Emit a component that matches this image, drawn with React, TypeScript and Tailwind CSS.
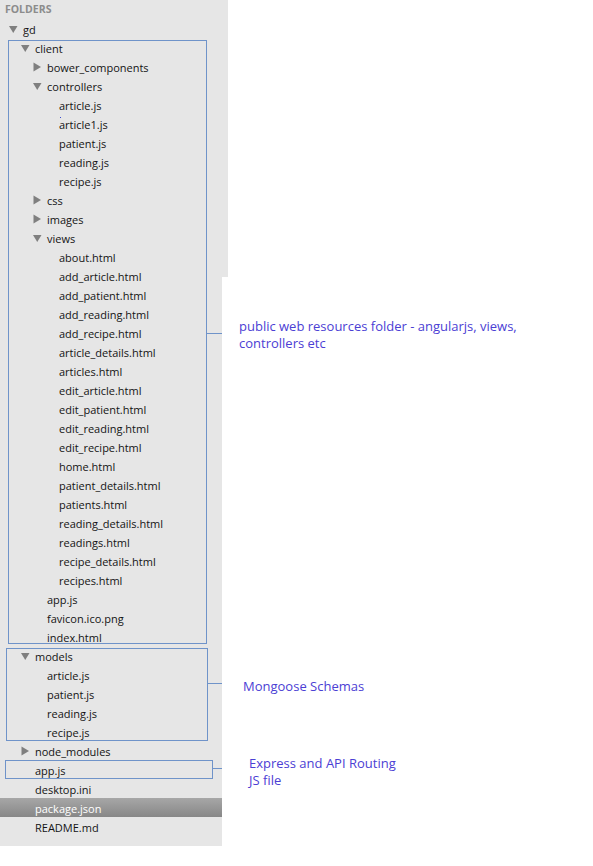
import React from "react";

type Kind = "open" | "closed" | "file";
type Row = { label: string; depth: number; kind: Kind; selected?: boolean };

const rows: Row[] = [
  { label: "gd", depth: 0, kind: "open" },
  { label: "client", depth: 1, kind: "open" },
  { label: "bower_components", depth: 2, kind: "closed" },
  { label: "controllers", depth: 2, kind: "open" },
  { label: "article.js", depth: 3, kind: "file" },
  { label: "article1.js", depth: 3, kind: "file" },
  { label: "patient.js", depth: 3, kind: "file" },
  { label: "reading.js", depth: 3, kind: "file" },
  { label: "recipe.js", depth: 3, kind: "file" },
  { label: "css", depth: 2, kind: "closed" },
  { label: "images", depth: 2, kind: "closed" },
  { label: "views", depth: 2, kind: "open" },
  { label: "about.html", depth: 3, kind: "file" },
  { label: "add_article.html", depth: 3, kind: "file" },
  { label: "add_patient.html", depth: 3, kind: "file" },
  { label: "add_reading.html", depth: 3, kind: "file" },
  { label: "add_recipe.html", depth: 3, kind: "file" },
  { label: "article_details.html", depth: 3, kind: "file" },
  { label: "articles.html", depth: 3, kind: "file" },
  { label: "edit_article.html", depth: 3, kind: "file" },
  { label: "edit_patient.html", depth: 3, kind: "file" },
  { label: "edit_reading.html", depth: 3, kind: "file" },
  { label: "edit_recipe.html", depth: 3, kind: "file" },
  { label: "home.html", depth: 3, kind: "file" },
  { label: "patient_details.html", depth: 3, kind: "file" },
  { label: "patients.html", depth: 3, kind: "file" },
  { label: "reading_details.html", depth: 3, kind: "file" },
  { label: "readings.html", depth: 3, kind: "file" },
  { label: "recipe_details.html", depth: 3, kind: "file" },
  { label: "recipes.html", depth: 3, kind: "file" },
  { label: "app.js", depth: 2, kind: "file" },
  { label: "favicon.ico.png", depth: 2, kind: "file" },
  { label: "index.html", depth: 2, kind: "file" },
  { label: "models", depth: 1, kind: "open" },
  { label: "article.js", depth: 2, kind: "file" },
  { label: "patient.js", depth: 2, kind: "file" },
  { label: "reading.js", depth: 2, kind: "file" },
  { label: "recipe.js", depth: 2, kind: "file" },
  { label: "node_modules", depth: 1, kind: "closed" },
  { label: "app.js", depth: 1, kind: "file" },
  { label: "desktop.ini", depth: 1, kind: "file" },
  { label: "package.json", depth: 1, kind: "file", selected: true },
  { label: "README.md", depth: 1, kind: "file" },
];

const padByDepth: Record<number, string> = {
  0: "pl-[9px]",
  1: "pl-[21px]",
  2: "pl-[33px]",
  3: "pl-[45px]",
};

function Arrow({ kind }: { kind: Kind }) {
  if (kind === "open") {
    return (
      <svg width="14" height="19" viewBox="0 0 14 19" className="shrink-0">
        <polygon points="0,7 8.5,7 4.25,14" fill="#7f7f7f" />
      </svg>
    );
  }
  if (kind === "closed") {
    return (
      <svg width="14" height="19" viewBox="0 0 14 19" className="shrink-0">
        <polygon points="0.5,5.5 8,10 0.5,14.5" fill="#7f7f7f" />
      </svg>
    );
  }
  return <span className="w-[14px] shrink-0" />;
}

function TreeRow({ row }: { row: Row }) {
  return (
    <div
      className={
        "flex h-[19px] items-center whitespace-nowrap " +
        padByDepth[row.depth] +
        (row.selected
          ? " bg-linear-to-b from-[#a7a7a7] to-[#878787] text-white"
          : " text-[#141414]")
      }
    >
      <Arrow kind={row.kind} />
      <span className="pt-[2px] leading-[17px]">{row.label}</span>
    </div>
  );
}

export default function App() {
  return (
    <div className="relative w-[593px] h-[866px] overflow-hidden bg-white font-['Open_Sans',sans-serif] text-[11px]">
      <div className="absolute left-[222px] top-0 h-[277px] w-[6px] bg-[#e6e6e6]" />
      <div className="relative w-[222px] bg-[#e6e6e6] pb-[10px]">
        <div className="flex h-[19px] items-center pl-[5px] pt-[1px] text-[10.5px] font-bold text-[#8c8c8c]">
          FOLDERS
        </div>
        {rows.map((r, i) => (
          <TreeRow key={i} row={r} />
        ))}
      </div>

      {/* annotation boxes drawn over the tree */}
      <div className="absolute left-[8px] top-[40px] h-[604px] w-[199px] border border-[#6f93c9]" />
      <div className="absolute left-[207px] top-[333px] h-px w-[15px] bg-[#6f93c9]" />

      <div className="absolute left-[6px] top-[648px] h-[93px] w-[202px] border border-[#6f93c9]" />
      <div className="absolute left-[208px] top-[683px] h-px w-[14px] bg-[#6f93c9]" />

      <div className="absolute left-[5px] top-[760px] h-[19px] w-[208px] border border-[#6f93c9]" />
      <div className="absolute left-[213px] top-[768px] h-px w-[9px] bg-[#6f93c9]" />

      <div className="absolute left-[60px] top-[117px] h-px w-px bg-[#3a4bd0]" />

      {/* annotation labels */}
      <div className="absolute left-[239px] top-[318px] w-[320px] text-[13px] leading-[17px] text-[#4b40d4]">
        public web resources folder - angularjs, views,
        <br />
        controllers etc
      </div>
      <div className="absolute left-[243px] top-[678px] text-[13px] leading-[17px] text-[#4b40d4]">
        Mongoose Schemas
      </div>
      <div className="absolute left-[249px] top-[755px] text-[13px] leading-[17px] text-[#4b40d4]">
        Express and API Routing
        <br />
        JS file
      </div>
    </div>
  );
}
